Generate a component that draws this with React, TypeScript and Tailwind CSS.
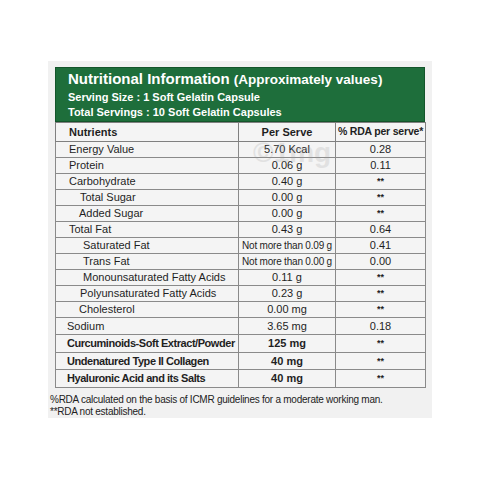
type Row = {
  name: string;
  indent: number;
  serve: string;
  rda: string;
  bold?: boolean;
  small?: boolean;
  h: string;
};

const rows: Row[] = [
  { name: "Energy Value", indent: 0, serve: "5.70 Kcal", rda: "0.28", h: "h-[16px]" },
  { name: "Protein", indent: 0, serve: "0.06 g", rda: "0.11", h: "h-[16px]" },
  { name: "Carbohydrate", indent: 0, serve: "0.40 g", rda: "**", h: "h-[16px]" },
  { name: "Total Sugar", indent: 2, serve: "0.00 g", rda: "**", h: "h-[16px]" },
  { name: "Added Sugar", indent: 1, serve: "0.00 g", rda: "**", h: "h-[16px]" },
  { name: "Total Fat", indent: 0, serve: "0.43 g", rda: "0.64", h: "h-[16px]" },
  { name: "Saturated Fat", indent: 3, serve: "Not more than 0.09 g", rda: "0.41", small: true, h: "h-[16px]" },
  { name: "Trans Fat", indent: 3, serve: "Not more than 0.00 g", rda: "0.00", small: true, h: "h-[16px]" },
  { name: "Monounsaturated Fatty Acids", indent: 3, serve: "0.11 g", rda: "**", h: "h-[16px]" },
  { name: "Polyunsaturated Fatty Acids", indent: 2, serve: "0.23 g", rda: "**", h: "h-[16px]" },
  { name: "Cholesterol", indent: 1, serve: "0.00 mg", rda: "**", h: "h-[16px]" },
  { name: "Sodium", indent: -1, serve: "3.65 mg", rda: "0.18", h: "h-[17px]" },
  { name: "Curcuminoids-Soft Extract/Powder", indent: -1, serve: "125 mg", rda: "**", bold: true, h: "h-[18px]" },
  { name: "Undenatured Type II Collagen", indent: -1, serve: "40 mg", rda: "**", bold: true, h: "h-[17px]" },
  { name: "Hyaluronic Acid and its Salts", indent: -1, serve: "40 mg", rda: "**", bold: true, h: "h-[18px]" },
];

const indentClass = (n: number) => {
  if (n === 3) return "pl-[27px]";
  if (n === 2) return "pl-[24px]";
  if (n === 1) return "pl-[23px]";
  if (n === -1) return "pl-[11px]";
  return "pl-[13px]";
};

export default function App() {
  return (
    <div className="min-h-[480px] w-[480px] bg-white pt-[61px] font-['Liberation_Sans',Arial,sans-serif] text-[#1f1f1f]">
      <div className="mx-auto h-[357px] w-[384px] bg-[#f1f1f1] px-[7px] pt-[6px]">
        <div className="h-[55px] border border-[#14552b] bg-[#1e6e3b] pl-[12px] pt-[1px] text-white">
          <div className="text-[15px] font-bold leading-[20px]">
            Nutritional Information{" "}
            <span className="text-[13.5px]">(Approximately values)</span>
          </div>
          <div className="text-[11px] font-bold leading-[15px]">Serving Size : 1 Soft Gelatin Capsule</div>
          <div className="text-[11px] font-bold leading-[15px]">Total Servings : 10 Soft Gelatin Capsules</div>
        </div>
        <div className="relative">
          <table className="w-[370px] table-fixed border-collapse border border-[#808080] bg-[#f4f4f4] text-[11px]">
            <colgroup>
              <col className="w-[183px]" />
              <col className="w-[97px]" />
              <col className="w-[90px]" />
            </colgroup>
            <thead>
              <tr className="h-[19px] font-bold">
                <td className="border border-[#808080] pl-[13px]">Nutrients</td>
                <td className="border border-[#808080] text-center">Per Serve</td>
                <td className="whitespace-nowrap border border-[#808080] text-center text-[10.5px] tracking-[-0.2px]">
                  % RDA per serve*
                </td>
              </tr>
            </thead>
            <tbody>
              {rows.map((r) => (
                <tr key={r.name} className={`${r.h} leading-none ${r.bold ? "font-bold" : ""}`}>
                  <td
                    className={`whitespace-nowrap border border-[#8a8a8a] ${indentClass(r.indent)} ${
                      r.bold ? "tracking-[-0.45px]" : ""
                    }`}
                  >
                    {r.name}
                  </td>
                  <td
                    className={`whitespace-nowrap border border-[#8a8a8a] text-center ${
                      r.small ? "text-[10px] tracking-[-0.2px]" : ""
                    }`}
                  >
                    {r.serve}
                  </td>
                  <td className={`border border-[#8a8a8a] text-center ${r.rda === "**" ? "text-[9px] font-bold" : ""}`}>
                    {r.rda}
                  </td>
                </tr>
              ))}
            </tbody>
          </table>
          <div className="pointer-events-none absolute left-[198px] top-[17px] text-[28px] font-bold leading-none text-[#9a9a9a] opacity-20">
            ©1mg
          </div>
        </div>
        <div className="-ml-[5px] mt-[6px] text-[10px] leading-[12px] tracking-[-0.25px] text-[#222]">
          <div>%RDA calculated on the basis of ICMR guidelines for a moderate working man.</div>
          <div>**RDA not established.</div>
        </div>
      </div>
    </div>
  );
}
